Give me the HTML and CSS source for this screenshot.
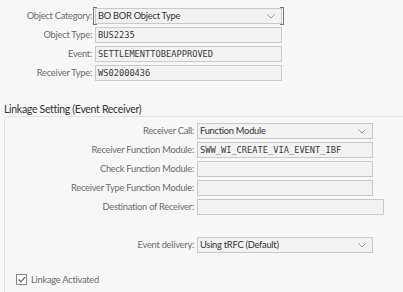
FILE: index.html
```html
<!DOCTYPE html>
<html lang="en">
<head>
  <meta charset="UTF-8">
  <title>Event Linkage</title>
  <link rel="stylesheet" href="styles.css">
</head>
<body>
  <div class="header-form">
    <label>Object Category:</label>
    <div class="field select focused"><span>BO BOR Object Type</span><svg class="chev" width="8" height="5" viewBox="0 0 8 5"><path d="M0.5 0.5 L4 4 L7.5 0.5" fill="none" stroke="#8a9aa8" stroke-width="1"/></svg></div>
    <label>Object Type:</label>
    <div class="field mono">BUS2235</div>
    <label>Event:</label>
    <div class="field mono">SETTLEMENTTOBEAPPROVED</div>
    <label>Receiver Type:</label>
    <div class="field mono">WS02000436</div>
  </div>

  <h2 class="section-title">Linkage Setting (Event Receiver)</h2>

  <div class="panel">
    <div class="panel-form">
      <label>Receiver Call:</label>
      <div class="field select"><span>Function Module</span><svg class="chev" width="8" height="5" viewBox="0 0 8 5"><path d="M0.5 0.5 L4 4 L7.5 0.5" fill="none" stroke="#8a9aa8" stroke-width="1"/></svg></div>
      <label>Receiver Function Module:</label>
      <div class="field mono">SWW_WI_CREATE_VIA_EVENT_IBF</div>
      <label>Check Function Module:</label>
      <div class="field"></div>
      <label>Receiver Type Function Module:</label>
      <div class="field"></div>
      <label>Destination of Receiver:</label>
      <div class="field wide"></div>
      <label class="spaced">Event delivery:</label>
      <div class="field select spaced"><span>Using tRFC (Default)</span><svg class="chev" width="8" height="5" viewBox="0 0 8 5"><path d="M0.5 0.5 L4 4 L7.5 0.5" fill="none" stroke="#8a9aa8" stroke-width="1"/></svg></div>
    </div>

    <div class="check-row">
      <span class="checkbox">
        <svg width="8" height="7" viewBox="0 0 8 7"><path d="M0.8 3.5 L3 5.8 L7.2 0.8" fill="none" stroke="#555" stroke-width="1.1"/></svg>
      </span>
      <span>Linkage Activated</span>
    </div>
  </div>
</body>
</html>
```

FILE: styles.css
```css
body {
  margin: 0;
  background-color: #f7f7f7;
  font-family: Lato, 'Open Sans', sans-serif;
  font-size: 9.3px;
  letter-spacing: -0.25px;
  color: #333;
  overflow: hidden;
}

label {
  color: #6c6c6c;
  text-align: right;
  line-height: 16px;
  white-space: nowrap;
}

.header-form {
  display: grid;
  grid-template-columns: 92px 187px;
  column-gap: 3px;
  row-gap: 3px;
  padding-top: 8px;
}

.field {
  height: 16px;
  box-sizing: border-box;
  background-color: #f2f2f2;
  border: 1px solid #c9c9c9;
  padding: 0 2px;
  line-height: 14px;
  color: #333;
  position: relative;
}

.mono {
  font-family: 'DejaVu Sans Mono', monospace;
  font-size: 8.7px;
  letter-spacing: 0;
  color: #3a3a3a;
}

.select {
  display: flex;
  align-items: center;
  justify-content: space-between;
  padding: 0 6px 0 2px;
}

.chev {
  flex-shrink: 0;
}

.focused::before,
.focused::after {
  content: "";
  position: absolute;
  top: -2px;
  bottom: -2px;
  width: 3px;
  border: 1px solid #777;
}

.focused::before {
  left: -3px;
  border-right: none;
}

.focused::after {
  right: -3px;
  border-left: none;
}

.section-title {
  margin: 21px 0 0 4px;
  font-size: 10.5px;
  letter-spacing: -0.3px;
  font-weight: normal;
  color: #333;
  line-height: 14px;
}

.panel {
  margin-left: 4px;
  border-top: 1px solid #e3e3e3;
  border-left: 1px solid #e3e3e3;
  padding-top: 6px;
  height: 170px;
}

.panel-form {
  display: grid;
  grid-template-columns: 189px 176px;
  column-gap: 3px;
  row-gap: 3px;
  align-items: start;
}

.panel-form .wide {
  width: 187px;
}

.panel-form .spaced {
  margin-top: 19px;
}

.check-row {
  display: flex;
  align-items: center;
  gap: 4px;
  margin: 21px 0 0 11px;
  color: #6c6c6c;
}

.checkbox {
  width: 9px;
  height: 9px;
  border: 1px solid #888;
  background-color: #fff;
  display: flex;
  align-items: center;
  justify-content: center;
}
```
